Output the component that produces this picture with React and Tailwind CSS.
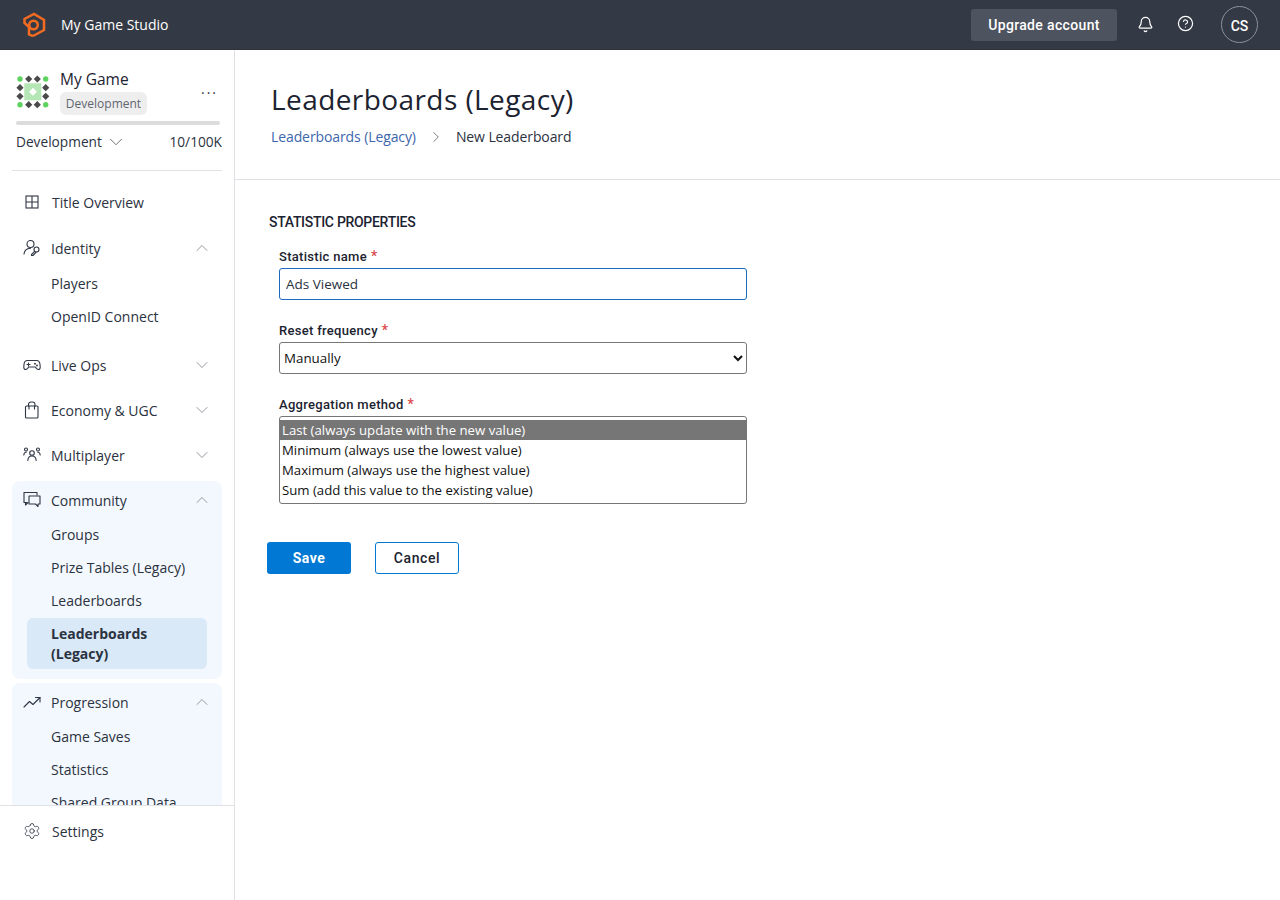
import React from "react";
import { ChevronDown, ChevronUp, ChevronRight, Settings, Bell, CircleHelp } from "lucide-react";

const din = "font-['Roboto',sans-serif]";
const sans = "font-['Open_Sans',sans-serif]";

function S({ children }) {
  return (
    <svg width="18" height="18" viewBox="0 0 18 18" fill="none" stroke="#2f3644" strokeWidth="1.1" strokeLinecap="round" strokeLinejoin="round" className="shrink-0">
      {children}
    </svg>
  );
}
const GridIcon = () => (
  <svg width="14" height="14" viewBox="0 0 14 14" fill="none" stroke="#2f3644" strokeWidth="1.1" className="shrink-0">
    <rect x="1" y="1" width="12" height="12" />
    <path d="M7 1v12M1 7h12" />
  </svg>
);
const IdentityIcon = () => (
  <S>
    <circle cx="7.500" cy="5" r="3.500" />
    <path d="M1 15c.3-3.500 2.500-5.500 6.500-5.800" />
    <circle cx="13.500" cy="10.500" r="2.500" />
    <path d="M11.700 12.300 8.500 15.500v1h1.500l3-3.200" />
  </S>
);
const GamepadIcon = () => (
  <S>
    <path d="M4.500 4.500h9c2 0 3.300 1.600 3.500 4l.2 2.500c.1 1.500-.7 2.500-1.800 2.500-.8 0-1.400-.5-2-1.200l-1-1.300H5.600l-1 1.300c-.6.7-1.200 1.200-2 1.200-1.100 0-1.900-1-1.800-2.500L1 8.500c.2-2.400 1.500-4 3.500-4Z" />
    <path d="M4 8.500h3M5.500 7v3" />
    <circle cx="12" cy="7.800" r=".4" />
    <circle cx="14" cy="9.500" r=".4" />
  </S>
);
const BagIcon = () => (
  <S>
    <rect x="2.500" y="5" width="12.500" height="12" rx="1" />
    <path d="M5.500 5V3.500A2.500 2.500 0 0 1 8 1h1.500A2.500 2.500 0 0 1 12 3.500V5M6 5v3M11.500 5v3" />
  </S>
);
const PeopleIcon = () => (
  <S>
    <circle cx="9" cy="7" r="2.300" />
    <path d="M4.800 14.500c.2-2.600 1.800-4.500 4.200-4.500s4 1.900 4.200 4.500" />
    <circle cx="3" cy="3.500" r="1.500" />
    <circle cx="15" cy="3.500" r="1.500" />
    <path d="M.8 9c.1-1.500 1-2.700 2.500-3M17.200 9c-.1-1.500-1-2.700-2.500-3" />
  </S>
);
const ChatIcon = () => (
  <S>
    <path d="M4 11.500H1V1.500h13v2.500" />
    <path d="M2.500 11.500v2.500l2.500-2.500" />
    <path d="M6 5h11v8h-2v2.500L12.500 13H6Z" />
  </S>
);
const TrendIcon = () => (
  <S>
    <path d="M1 14 6.500 8.500l3.500 3 7-7" />
    <path d="M12.500 4.500H17V9" />
  </S>
);

function Row({ icon, label, open, cls = "h-[37px] pt-[1px]" }) {
  const Chev = open ? ChevronUp : ChevronDown;
  return (
    <div className={`${cls} pl-[11px] pr-[15px] flex items-center`}>
      <span className="w-[17px] flex justify-center shrink-0">{icon}</span>
      <span className="ml-[11px] flex-1 text-[14px] text-[#2b3240]">{label}</span>
      <Chev size={20} strokeWidth={1.100} className="text-[#8a8f98] -mr-[5px]" />
    </div>
  );
}
function Sub({ children }) {
  return <div className="h-[33px] pl-[39px] flex items-center text-[14px] text-[#2b3240] whitespace-nowrap">{children}</div>;
}
function Req() {
  return <span className="text-[#d9484c] ml-[4px] text-[14px] leading-[14px]">*</span>;
}

function GameLogo() {
  const dark = [[28.7, 80], [37.3, 80], [20, 88.7], [20, 97.3], [45.7, 88.7], [45.7, 97.3], [28.7, 105.7], [37.3, 105.7]];
  const green = [[20, 80], [45.7, 80], [20, 105.7], [45.7, 105.7]];
  return (
    <svg width="36" height="36" viewBox="15 75 36 36" className="shrink-0 -ml-[1px] mr-[1px]">
      <rect x="24.300" y="84.300" width="17" height="17" fill="#b5e6b5" />
      <path d="M33 88.800 37 92.800 33 96.800 29 92.800Z" fill="#fff" />
      {dark.map(([x, y], i) => (
        <path key={i} d={`M${x} ${y - 3.6}L${x + 3.6} ${y}L${x} ${y + 3.6}L${x - 3.6} ${y}Z`} fill="#4a4a4a" />
      ))}
      {green.map(([x, y], i) => (
        <circle key={i} cx={x} cy={y} r="2.700" fill="#5fd35f" />
      ))}
    </svg>
  );
}

const labelCls = `block text-[13px] leading-[20px] font-medium tracking-[0.3px] text-[#1c2330] ${din}`;
const optCls = "h-[20px] px-[2px] pt-[1px] pb-0 leading-[19px]";

export default function App() {
  return (
    <div className={`w-[1280px] h-[900px] overflow-hidden flex flex-col bg-white ${sans}`}>
      <header className="h-[50px] shrink-0 bg-[#343a45] border-b border-[#2c313a] flex items-center text-white">
        <svg width="24" height="26" viewBox="0 0 24 26" fill="none" stroke="#f26b21" strokeWidth="2.500" strokeLinejoin="miter" className="ml-[22px]">
          <path d="M11 24 22 18V8L12 2 2.500 7v4L7 15v7.500L11 24" />
          <circle cx="11.500" cy="13" r="4.300" />
        </svg>
        <span className="ml-[15px] text-[14px] font-medium">My Game Studio</span>
        <div className="flex-1" />
        <button className={`w-[146px] h-[32px] pt-[1px] rounded-[3px] bg-[#4d535f] text-[14px] font-medium tracking-[0.35px] ${din}`}>Upgrade account</button>
        <Bell size={17} strokeWidth={1.700} className="ml-[20px]" />
        <CircleHelp size={17} strokeWidth={1.700} className="ml-[23px] -mt-[2px]" />
        <div className={`ml-[27px] mr-[22px] w-[37px] h-[37px] pt-[3px] rounded-full border border-[#8d9199] flex items-center justify-center text-[14px] font-medium ${din}`}>CS</div>
      </header>

      <div className="flex-1 flex min-h-0">
        <aside className="w-[235px] shrink-0 border-r border-[#dfe1e4] flex flex-col">
          <div className="h-[121px] shrink-0 px-[16px] pt-[20px] mr-[12px] relative">
            <div className="flex items-center -mt-[1px]">
              <GameLogo />
              <div className="ml-[8px] flex flex-col items-start">
                <span className="text-[15.500px] font-medium leading-[20px] text-[#1c2330]">My Game</span>
                <span className="mt-[3px] h-[23px] w-[87px] rounded-[6px] bg-[#eeeeee] text-[12px] leading-[23px] text-center text-[#5f6670]">Development</span>
              </div>
              <span className="absolute left-[201px] top-[29px] text-[14px] leading-[20px] text-[#333] tracking-[2px]">...</span>
            </div>
            <div className="mt-[6px] h-[4px] w-[204px] rounded-full bg-[#dcdcdc]" />
            <div className="mt-[6px] flex items-center text-[13.700px] leading-[22px] text-[#2b3240] -mr-[6px] w-[206px]">
              <span>Development</span>
              <ChevronDown size={22} strokeWidth={0.900} className="ml-[3px] text-[#555]" />
              <span className="flex-1 text-right">10/100K</span>
            </div>
            <div className="absolute left-[12px] right-0 bottom-0 border-b border-[#dfe1e4]" />
          </div>

          <nav className="flex-1 min-h-0 overflow-hidden pt-[11px] px-[12px] flex flex-col gap-[5px]">
            <div className="h-[40px] shrink-0 pl-[13px] flex items-center">
              <GridIcon />
              <span className="ml-[13px] text-[14px] text-[#2b3240]">Title Overview</span>
            </div>
            <div className="shrink-0 pb-[8px] mt-[2px]">
              <Row icon={<IdentityIcon />} label="Identity" open cls="h-[38px]" />
              <Sub>Players</Sub>
              <Sub>OpenID Connect</Sub>
            </div>
            <div className="shrink-0 h-[40px]"><Row icon={<GamepadIcon />} label="Live Ops" /></div>
            <div className="shrink-0 h-[40px]"><Row icon={<BagIcon />} label="Economy &amp; UGC" /></div>
            <div className="shrink-0 h-[40px]"><Row icon={<PeopleIcon />} label="Multiplayer" /></div>
            <div className="shrink-0 rounded-[8px] bg-[#f3f8fe] pb-[10px]">
              <Row icon={<ChatIcon />} label="Community" open />
              <Sub>Groups</Sub>
              <Sub>Prize Tables (Legacy)</Sub>
              <Sub>Leaderboards</Sub>
              <div className="mx-[15px] mt-[1px] py-[6px] pl-[24px] pr-[8px] rounded-[6px] bg-[#d9e9f8] text-[14px] leading-[20px] font-bold text-[#2b3240] h-[51px]">
                Leaderboards (Legacy)
              </div>
            </div>
            <div className="shrink-0 rounded-[8px] bg-[#f3f8fe] pb-[10px] -mt-[1px]">
              <Row icon={<TrendIcon />} label="Progression" open />
              <Sub>Game Saves</Sub>
              <Sub>Statistics</Sub>
              <Sub>Shared Group Data</Sub>
            </div>
          </nav>

          <div className="h-[95px] shrink-0 border-t border-[#dfe1e4] pl-[23px] pt-[15px] flex items-start">
            <div className="flex items-center h-[20px]">
              <Settings size={18} strokeWidth={1.100} className="text-[#2f3644]" />
              <span className="ml-[11px] text-[14px] text-[#2b3240]">Settings</span>
            </div>
          </div>
        </aside>

        <main className="flex-1 min-w-0">
          <div className="h-[130px] border-b border-[#dfe1e4] pl-[36px] pt-[28px]">
            <h1 className="text-[28px] leading-[42px] tracking-[0.42px] text-[#1c2330]">Leaderboards (Legacy)</h1>
            <div className="mt-[7px] flex items-center text-[14px] leading-[20px] tracking-[-0.1px]">
              <span className="text-[#3d66ab]">Leaderboards (Legacy)</span>
              <ChevronRight size={18} strokeWidth={1} className="ml-[11px] text-[#555]" />
              <span className="ml-[11px] text-[#2b3240]">New Leaderboard</span>
            </div>
          </div>

          <form className="pl-[32px] pt-[32px]">
            <h2 className={`ml-[2px] text-[14px] leading-[20px] font-medium tracking-[-0.3px] text-[#1c2330] ${din}`}>STATISTIC PROPERTIES</h2>
            <div className="ml-[12px] w-[468px]">
              <label className={`mt-[15px] ${labelCls}`}>
                Statistic name<Req />
              </label>
              <input
                readOnly
                defaultValue="Ads Viewed"
                className="mt-[1px] block w-full h-[32px] rounded-[3px] border border-[#1a6bc0] px-[6px] text-[13.500px] text-[#2b3240] outline-none"
              />
              <label className={`mt-[21px] ${labelCls}`}>
                Reset frequency<Req />
              </label>
              <select className="mt-[1px] block w-full h-[32px] rounded-[3px] border border-[#767676] text-[13.333px] text-[#111] outline-none">
                <option>Manually</option>
              </select>
              <label className={`mt-[21px] ${labelCls}`}>
                Aggregation method<Req />
              </label>
              <select
                size={4}
                defaultValue="last"
                className="mt-[1px] block w-full h-[88px] rounded-[3px] border border-[#767676] py-[3px] text-[13.200px] leading-[20px] text-[#111] outline-none overflow-hidden"
              >
                <option value="last" className={`${optCls} checked:bg-[#767676] checked:text-white`}>Last (always update with the new value)</option>
                <option value="min" className={optCls}>Minimum (always use the lowest value)</option>
                <option value="max" className={optCls}>Maximum (always use the highest value)</option>
                <option value="sum" className={optCls}>Sum (add this value to the existing value)</option>
              </select>
            </div>
            <div className="mt-[38px] flex">
              <button type="button" className={`w-[84px] h-[32px] rounded-[3px] bg-[#0078d4] text-white text-[14px] font-bold tracking-[0.5px] ${din}`}>Save</button>
              <button type="button" className={`ml-[24px] w-[84px] h-[32px] rounded-[3px] border border-[#0078d4] text-[#1c2330] text-[14px] font-medium tracking-[0.6px] ${din}`}>Cancel</button>
            </div>
          </form>
        </main>
      </div>
    </div>
  );
}
